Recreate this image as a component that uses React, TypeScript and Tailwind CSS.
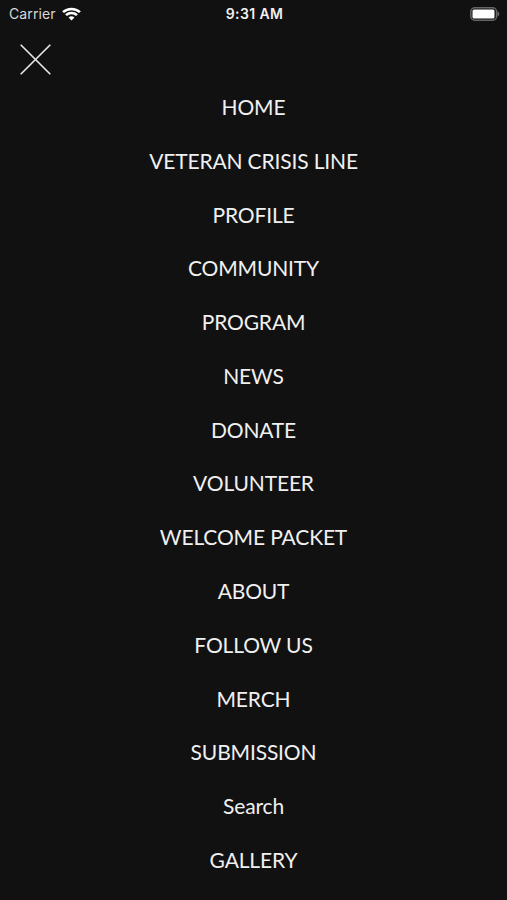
const items = ["HOME","VETERAN CRISIS LINE","PROFILE","COMMUNITY","PROGRAM","NEWS","DONATE","VOLUNTEER","WELCOME PACKET","ABOUT","FOLLOW US","MERCH","SUBMISSION","Search","GALLERY"];

export default function App() {
  return (
    <div className="flex h-[900px] w-[507px] flex-col overflow-hidden bg-[#111111] text-[#f0f0f0]">
      <header className="grid h-[27px] shrink-0 grid-cols-3 items-center pl-[9px] pr-[6px] font-['Inter',sans-serif] text-[14px]">
        <div className="flex items-center gap-[6px] text-[#d8d8d8]">
          <span className="tracking-[0.1px]">Carrier</span>
          <svg width="19" height="14" viewBox="0 0 18 14" preserveAspectRatio="none" fill="none" stroke="#fff" strokeWidth="2.5">
            <path d="M1 5.2a11.5 11.5 0 0 1 16 0M3.8 8.2a7.5 7.5 0 0 1 10.4 0" />
            <path d="M9 13.4 6.2 10.5a4 4 0 0 1 5.6 0Z" fill="#fff" stroke="none" />
          </svg>
        </div>
        <span className="-ml-[1px] text-center font-semibold tracking-[0.4px]">9:31 AM</span>
        <svg className="justify-self-end" width="31" height="14" viewBox="0 0 31 14">
          <rect x=".8" y=".8" width="25.8" height="12.4" rx="4" fill="none" stroke="#666" strokeWidth="1.5" />
          <rect x="2.5" y="2.5" width="22" height="9" rx="1.5" fill="#fff" />
          <path d="M27.5 4.3c2.4.8 2.4 4.6 0 5.4Z" fill="#666" />
        </svg>
      </header>
      <button aria-label="Close menu" className="ml-[20px] mt-[17px] h-[31px] w-[31px] shrink-0">
        <svg width="31" height="31" viewBox="0 0 31 31" stroke="#e8e8e8" strokeWidth="1.6">
          <path d="m.7.7 29.6 29.6M30.3.7.7 30.3" />
        </svg>
      </button>
      <nav className="mt-[5px] flex flex-col items-center font-['Lato',sans-serif] text-[21px] tracking-[-0.15px]">
        {items.map((item) => (
          <a key={item} className="flex h-[53.78px] items-center whitespace-nowrap">{item}</a>
        ))}
      </nav>
    </div>
  );
}
